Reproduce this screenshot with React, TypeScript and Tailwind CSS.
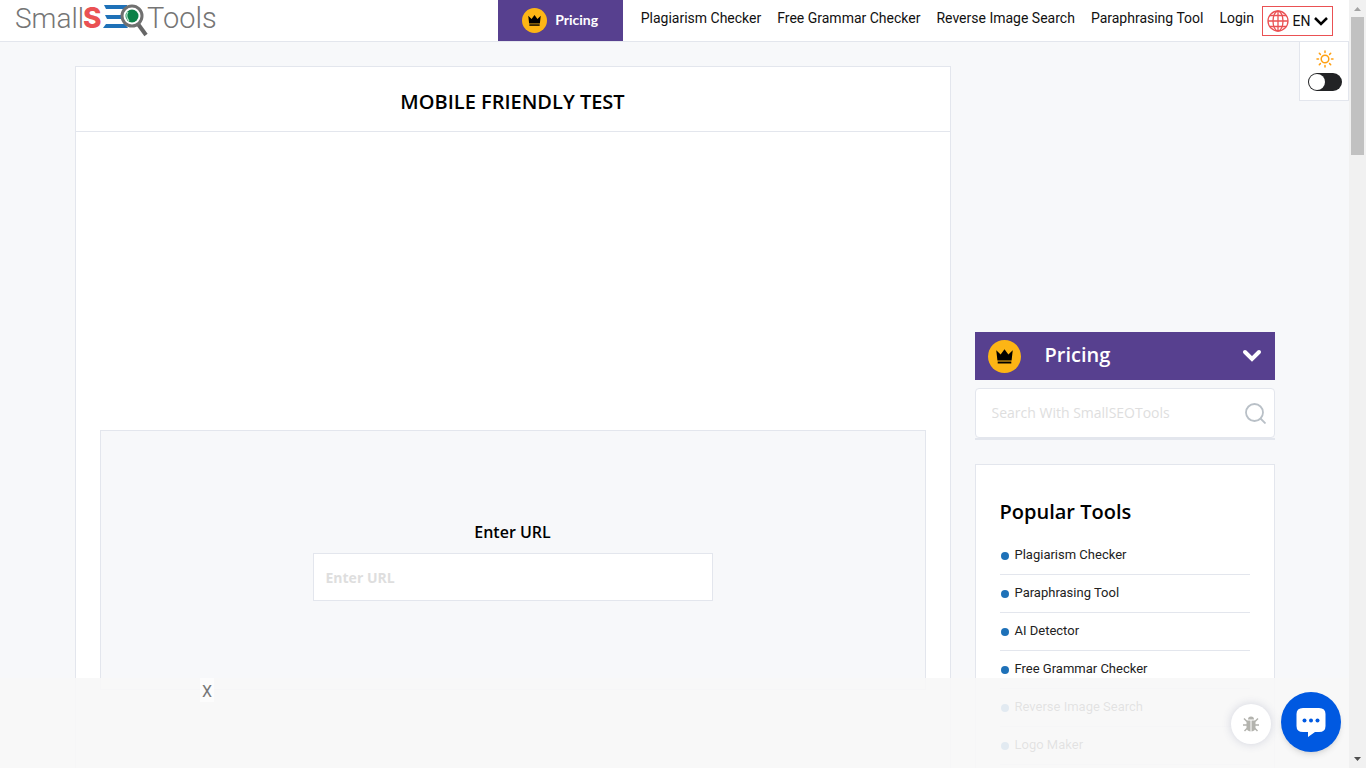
import React from "react"

const navLinks = [
  "Plagiarism Checker",
  "Free Grammar Checker",
  "Reverse Image Search",
  "Paraphrasing Tool",
  "Login",
]

const popularTools = [
  "Plagiarism Checker",
  "Paraphrasing Tool",
  "AI Detector",
  "Free Grammar Checker",
  "Reverse Image Search",
  "Logo Maker",
]

function Logo() {
  return (
    <svg width="210" height="40" viewBox="0 0 210 40" role="img" aria-label="SmallSEOTools">
      <g fill="#757575" fontFamily="Roboto, sans-serif" fontWeight="300">
        <text x="0" y="28" fontSize="28">Small</text>
        <text x="132" y="28" fontSize="29">Tools</text>
      </g>
      <text x="68" y="28" fill="#ea5153" fontFamily="Inter, sans-serif" fontWeight="800" fontSize="28">
        S
      </text>
      <g fill="#1e71b8">
        <path d="M89 5 H112 V9 H91 Z" />
        <path d="M90 15 H108 V19 H92 Z" />
        <path d="M91 24 H110 L113 28 H88 Z" />
      </g>
      <path d="M123 24 L131 35" stroke="#666" strokeWidth="4" />
      <circle cx="117" cy="16" r="10" fill="#fff" stroke="#707070" strokeWidth="3" />
      <circle cx="117" cy="16" r="6.5" fill="#0c8148" />
      <path d="M113 12 q-3 4 1 9" fill="none" stroke="#b9e3cc" strokeWidth="1.2" />
    </svg>
  )
}

function Crown({ className }: { className: string }) {
  return (
    <svg className={className} viewBox="0 0 34 34" aria-hidden="true">
      <circle cx="17" cy="17" r="17" fill="#fdb515" />
      <path d="M8.500 10.500 L13 15 L17 9.500 L21 15 L25.500 10.500 L24.300 21 H9.700 Z" fill="#000" />
      <rect x="10" y="22.200" width="14" height="2" fill="#000" />
    </svg>
  )
}

function Header() {
  return (
    <header className="flex h-[42px] items-start justify-between border-b border-[#e3e6ed] bg-white pl-[15px] pr-4">
      <a href="#home">
        <Logo />
      </a>
      <nav className="flex items-start font-['Roboto',sans-serif] text-sm text-[#111]">
        <a
          href="#pricing"
          className="mr-[18px] flex h-[41px] w-[125px] items-center justify-center gap-2 bg-[#57408f] font-['Lato',sans-serif] font-bold text-white"
        >
          <Crown className="h-[25px] w-[25px]" />
          <span className="pb-[2px]">Pricing</span>
        </a>
        <div className="flex gap-4 pt-2">
          {navLinks.map((label) => (
            <a key={label} href="#tool" className="whitespace-nowrap">
              {label}
            </a>
          ))}
        </div>
        <button
          type="button"
          className="ml-2 mt-[6px] flex h-[30px] w-[71px] items-center justify-between border border-[#ea5153] px-1"
        >
          <svg width="22" height="22" viewBox="0 0 22 22" fill="none" stroke="#ea5153" strokeWidth="1.300" aria-hidden="true">
            <circle cx="11" cy="11" r="10" />
            <ellipse cx="11" cy="11" rx="5" ry="10" />
            <path d="M11 1 V21 M1 11 H21 M3 5.500 H19 M3 16.500 H19" />
          </svg>
          EN
          <svg width="14" height="9" viewBox="0 0 14 9" fill="none" stroke="#000" strokeWidth="2.500" aria-hidden="true">
            <path d="M1 1 L7 7 L13 1" />
          </svg>
        </button>
      </nav>
    </header>
  )
}

function ThemeSwitch() {
  return (
    <div className="absolute right-0 top-[41px] flex h-[60px] w-[50px] flex-col items-center gap-[5px] border border-[#e3e6ed] bg-white pl-px pt-2">
      <svg width="18" height="18" viewBox="0 0 18 18" fill="none" stroke="#ffa012" strokeWidth="1.500" strokeLinecap="round" aria-hidden="true">
        <circle cx="9" cy="9" r="3.800" />
        <path d="M9 1 V2.500 M9 15.500 V17 M1 9 H2.500 M15.500 9 H17 M3.300 3.300 L4.400 4.400 M13.600 13.600 L14.700 14.700 M3.300 14.700 L4.400 13.600 M13.600 4.400 L14.700 3.300" />
      </svg>
      <input
        type="checkbox"
        role="switch"
        aria-label="Dark mode"
        className="h-[18px] w-[34px] appearance-none rounded-full bg-[#222325] before:ml-px before:mt-px before:block before:h-4 before:w-4 before:rounded-full before:bg-white checked:before:ml-4"
      />
    </div>
  )
}

function TestCard() {
  return (
    <main className="min-w-0 flex-1 border border-[#e3e6ed] bg-white pb-40">
      <h1 className="border-b border-[#e3e6ed] pb-[15px] pt-[21px] text-center text-xl font-semibold text-black">
        MOBILE FRIENDLY TEST
      </h1>
      <div className="h-[298px]" />
      <form className="mx-6 flex h-[260px] flex-col items-center border border-[#e3e6ed] bg-[#f7f8fa] pt-[89px]">
        <label htmlFor="url" className="text-base font-semibold text-black">
          Enter URL
        </label>
        <input
          id="url"
          type="text"
          placeholder="Enter URL"
          className="mt-[9px] h-12 w-[400px] max-w-full border border-[#e3e6ed] bg-white px-3 text-sm font-bold placeholder:text-[#dedede]"
        />
      </form>
    </main>
  )
}

function Sidebar() {
  return (
    <aside className="flex w-[300px] shrink-0 flex-col pt-[266px]">
      <button type="button" className="flex h-12 items-center bg-[#57408f] px-[13px] text-xl font-semibold text-white">
        <Crown className="mr-6 h-[33px] w-[33px]" />
        <span className="pb-[2px]">Pricing</span>
        <svg className="ml-auto" width="20" height="14" viewBox="0 0 20 14" fill="none" stroke="#fff" strokeWidth="4" strokeLinecap="round" aria-hidden="true">
          <path d="M3 3 L10 10 L17 3" />
        </svg>
      </button>
      <div className="mt-2 border-b-2 border-[#e3e6ed]">
        <label className="flex h-[50px] items-center rounded border border-[#e3e6ed] bg-white pl-4 pr-2">
          <input
            type="text"
            aria-label="Search With SmallSEOTools"
            placeholder="Search With SmallSEOTools"
            className="min-w-0 flex-1 text-sm placeholder:text-[#dedede]"
          />
          <svg width="21" height="21" viewBox="0 0 21 21" fill="none" stroke="#b9c0c7" strokeWidth="1.800" aria-hidden="true">
            <circle cx="9.500" cy="9.500" r="8.500" />
            <path d="M15.500 15.500 L20.500 20.500" />
          </svg>
        </label>
      </div>
      <section className="mt-6 border border-[#e3e6ed] bg-white px-6 pb-10 pt-[33px]">
        <h2 className="text-xl font-semibold text-black">Popular Tools</h2>
        <ul className="mt-[11px] font-['Roboto',sans-serif] text-[13px] text-[#222]">
          {popularTools.map((tool) => (
            <li key={tool} className="border-b border-[#e3e6ed]">
              <a href="#tool" className="flex h-[37px] items-center gap-[6px] pb-px pl-px">
                <span className="mt-[2px] h-2 w-2 rounded-full bg-[#1e71b8]" />
                {tool}
              </a>
            </li>
          ))}
        </ul>
      </section>
    </aside>
  )
}

function FloatingButtons() {
  return (
    <>
      <button
        type="button"
        aria-label="Report a bug"
        className="absolute bottom-6 right-[78px] flex h-10 w-10 items-center justify-center rounded-full bg-white shadow-[0_0_10px_rgba(60,70,120,0.2)]"
      >
        <svg width="16" height="16" viewBox="0 0 16 16" aria-hidden="true">
          <path d="M5 3.500 A3 3 0 0 1 11 3.500 Z" fill="#b3b3ae" />
          <path d="M3.500 4.500 H7.500 V15.500 Q3.500 15 3.500 11 Z M8.500 4.500 H12.500 V11 Q12.500 15 8.500 15.500 Z" fill="#b3b3ae" />
          <path d="M1 2.500 L4 5.500 M15 2.500 L12 5.500 M0 9 H4 M16 9 H12 M1.500 15 L4.500 12 M14.500 15 L11.500 12" stroke="#b3b3ae" strokeWidth="1.500" />
        </svg>
      </button>
      <button
        type="button"
        aria-label="Open chat"
        className="absolute bottom-4 right-2 flex h-[60px] w-[60px] items-center justify-center rounded-full bg-[#0059e1] shadow-md"
      >
        <svg width="30" height="30" viewBox="0 0 30 30" aria-hidden="true">
          <path d="M7 1 H23 Q29.500 1 29.500 7 V19 Q29.500 25 23 25 H19 L12 30 V25 H7 Q0.500 25 0.500 19 V7 Q0.500 1 7 1 Z" fill="#fff" />
          <g fill="#0059e1">
            <circle cx="8.500" cy="13.500" r="2" />
            <circle cx="15" cy="13.500" r="2" />
            <circle cx="21.500" cy="13.500" r="2" />
          </g>
        </svg>
      </button>
    </>
  )
}

function Scrollbar() {
  return (
    <div className="flex w-[17px] shrink-0 flex-col items-center bg-[#f1f1f1]" aria-hidden="true">
      <svg width="17" height="17" viewBox="0 0 17 17">
        <path d="M5 11 L8.500 7 L12 11 Z" fill="#a3a3a3" />
      </svg>
      <div className="h-[138px] w-[13px] bg-[#c1c1c1]" />
      <svg className="mt-auto" width="17" height="17" viewBox="0 0 17 17">
        <path d="M5 6 L8.500 10 L12 6 Z" fill="#505050" />
      </svg>
    </div>
  )
}

function App() {
  return (
    <div className="flex h-screen overflow-hidden bg-[#f7f8fa] font-['Open_Sans',sans-serif]">
      <div className="relative min-w-0 flex-1 overflow-hidden">
        <Header />
        <div className="mx-auto flex max-w-[1200px] gap-6 pt-6">
          <TestCard />
          <Sidebar />
        </div>
        <ThemeSwitch />
        <div className="absolute inset-x-0 bottom-0 h-[90px] bg-[#f7f7f7]/90">
          <button
            type="button"
            className="ml-[200px] block h-6 w-[14px] bg-white/60 pt-1 text-center font-['Roboto',sans-serif] text-base leading-5 text-[#777]"
          >
            X
          </button>
        </div>
        <FloatingButtons />
      </div>
      <Scrollbar />
    </div>
  )
}

export default App
